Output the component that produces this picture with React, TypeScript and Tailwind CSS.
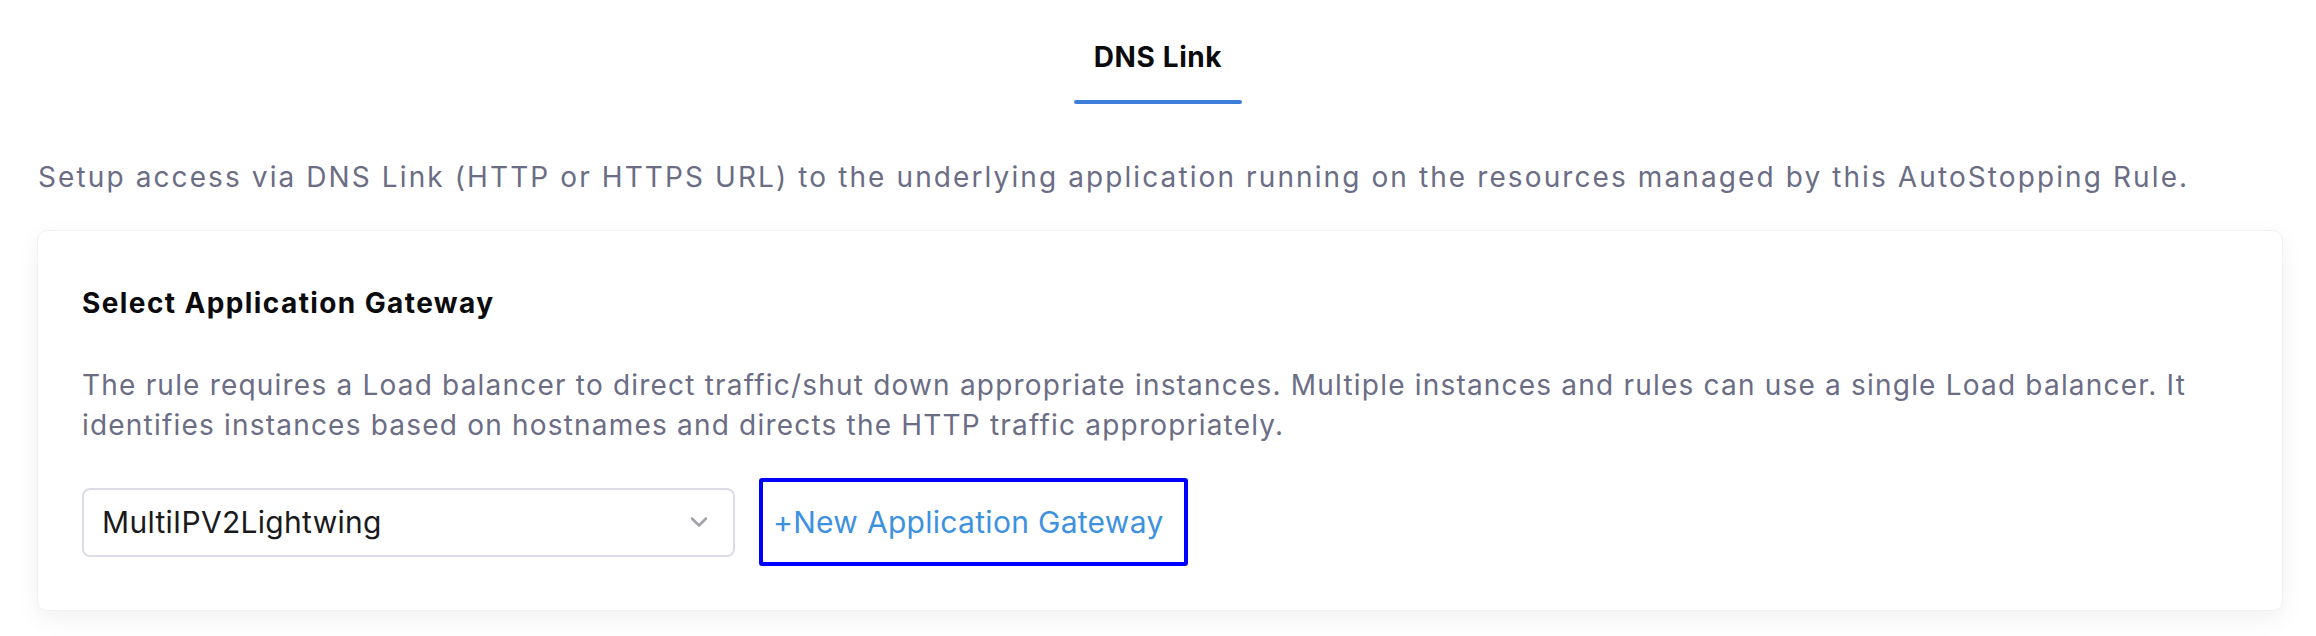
import { ChevronDown } from "lucide-react";

const FONT = { fontFamily: "Inter, 'Noto Sans', sans-serif" };

export default function App() {
  return (
    <div className="min-h-[636px] bg-white antialiased" style={FONT}>
      {/* Tabs */}
      <div className="flex justify-center pt-[43px]">
        <div className="flex flex-col items-center">
          <div className="px-[17px] text-[28px] leading-[28px] font-bold tracking-[0.6px] text-[#0b0b0d]">DNS Link</div>
          <div className="mt-[29px] h-[4px] w-[168px] rounded-full bg-[#3d7fd8]" />
        </div>
      </div>

      <div className="pl-[37px] pr-[33px]">
        <p className="mt-[53px] pl-px text-[28px] leading-[40px] tracking-[2.1px] text-[#6b6d85]">
          Setup access via DNS Link (HTTP or HTTPS URL) to the underlying application running on the resources managed by
          this AutoStopping Rule.
        </p>

        {/* Card */}
        <div className="mt-[33px] rounded-[10px] border border-[#f2f2f4] bg-white pl-[44px] pr-[44px] pt-[52px] pb-[44px] shadow-[0_8px_24px_rgba(0,0,0,0.06)]">
          <h2 className="text-[28px] leading-[40px] font-bold tracking-[1.4px] text-[#0b0b0d]">Select Application Gateway</h2>
          <p className="mt-[42px] text-[28px] leading-[40px] tracking-[1.2px] text-[#6b6d85]">
            The rule requires a Load balancer to direct traffic/shut down appropriate instances. Multiple instances and
            rules can use a single Load balancer. It identifies instances based on hostnames and directs the HTTP
            traffic appropriately.
          </p>

          <div className="mt-[33px] flex items-center gap-[24px]">
            <div className="flex h-[69px] w-[653px] items-center justify-between rounded-[8px] border-2 border-[#dcdce8] bg-white pl-[18px] pr-[20px]">
              <span className="text-[30px] tracking-[0.3px] text-[#1a1a1c]">MultiIPV2Lightwing</span>
              <ChevronDown className="h-[28px] w-[28px] text-[#a3a3ad]" strokeWidth={2.2} />
            </div>
            <div className="flex h-[88px] items-center rounded-[3px] border-4 border-[#0000ff] pl-[10px] pr-[20px]">
              <span className="text-[30px] tracking-[0.3px] text-[#3d91df]">+New Application Gateway</span>
            </div>
          </div>
        </div>
      </div>
    </div>
  );
}
